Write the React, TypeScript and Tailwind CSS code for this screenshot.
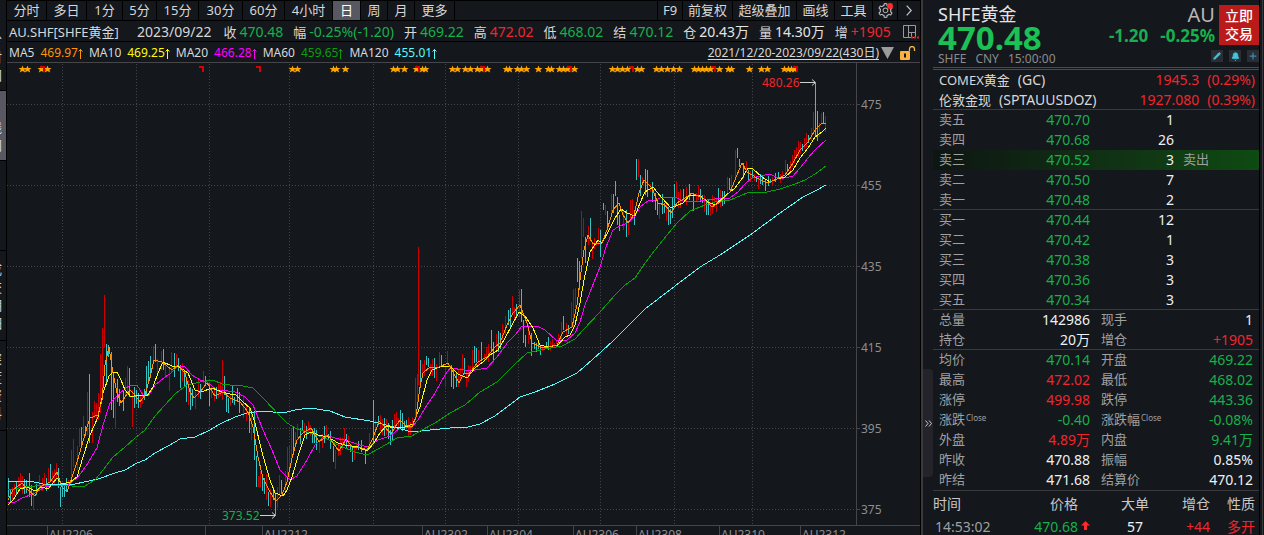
import { Bell, Pencil, Plus } from 'lucide-react';
import { AiOutlineSetting } from 'react-icons/ai';

type Bar = [number, number, number, 'r' | 'c'];

const PERIODS = [
  { label: '分时', width: 'w-10' },
  { label: '多日', width: 'w-10' },
  { label: '1分', width: 'w-9' },
  { label: '5分', width: 'w-[34px]' },
  { label: '15分', width: 'w-[42px]' },
  { label: '30分', width: 'w-11' },
  { label: '60分', width: 'w-[42px]' },
  { label: '4小时', width: 'w-12' },
  { label: '日', width: 'w-7', active: true },
  { label: '周', width: 'w-[27px]' },
  { label: '月', width: 'w-[27px]' },
  { label: '更多', width: 'w-10' },
];

const TOOLS = [
  { label: 'F9', width: 'w-[25px]' },
  { label: '前复权', width: 'w-[50px]' },
  { label: '超级叠加', width: 'w-16' },
  { label: '画线', width: 'w-[38px]' },
  { label: '工具', width: 'w-[38px]' },
];

const QUOTE = [
  { label: '收', value: '470.48', color: 'text-[#18b04c]' },
  { label: '幅', value: '-0.25%(-1.20)', color: 'text-[#18b04c]' },
  { label: '开', value: '469.22', color: 'text-[#18b04c]' },
  { label: '高', value: '472.02', color: 'text-[#f0262d]' },
  { label: '低', value: '468.02', color: 'text-[#18b04c]' },
  { label: '结', value: '470.12', color: 'text-[#18b04c]' },
  { label: '仓', value: '20.43万', color: 'text-[#e4e4e4]' },
  { label: '量', value: '14.30万', color: 'text-[#e4e4e4]' },
  { label: '增', value: '+1905', color: 'text-[#f0262d]' },
];

const AVERAGES = [
  { label: 'MA5', value: '469.97', color: 'text-[#ff9500]' },
  { label: 'MA10', value: '469.25', color: 'text-[#ffff00]' },
  { label: 'MA20', value: '466.28', color: 'text-[#ff00ff]' },
  { label: 'MA60', value: '459.65', color: 'text-[#08a008]' },
  { label: 'MA120', value: '455.01', color: 'text-[#54fcfc]' },
];

const SIDE_TABS = [
  { label: '分时图', box: 'h-[91px] items-end pb-1.5' },
  { label: 'K线图', box: 'h-[70px] items-end bg-[#585862] pb-1.5' },
  { label: '', box: 'h-[90px]' },
  { label: '成交明细', box: 'h-[90px] items-center' },
  { label: '深度资料', box: 'h-[90px] items-center' },
];

const SELLS = [
  ['卖五', '470.70', '1'],
  ['卖四', '470.68', '26'],
  ['卖三', '470.52', '3'],
  ['卖二', '470.50', '7'],
  ['卖一', '470.48', '2'],
];

const BUYS = [
  ['买一', '470.44', '12'],
  ['买二', '470.42', '1'],
  ['买三', '470.38', '3'],
  ['买四', '470.36', '3'],
  ['买五', '470.34', '3'],
];

const WHITE = 'text-[#f0f0f0]';
const RED = 'text-[#f0262d]';
const GREEN = 'text-[#18b04c]';

// label, value, colour, small mark after the label
const STATS: [string, string, string, string?][][] = [
  [['总量', '142986', WHITE], ['现手', '1', WHITE]],
  [['持仓', '20万', WHITE], ['增仓', '+1905', RED]],
  [['均价', '470.14', GREEN], ['开盘', '469.22', GREEN]],
  [['最高', '472.02', RED], ['最低', '468.02', GREEN]],
  [['涨停', '499.98', RED], ['跌停', '443.36', GREEN]],
  [['涨跌', '-0.40', GREEN, 'Close'], ['涨跌幅', '-0.08%', GREEN, 'Close']],
  [['外盘', '4.89万', RED], ['内盘', '9.41万', GREEN]],
  [['昨收', '470.88', WHITE], ['振幅', '0.85%', WHITE]],
  [['昨结', '471.68', WHITE], ['结算价', '470.12', WHITE]],
];

const MA5 =
  '8,500 13,490 22,483 28,490 35,496 40,487 50,482 57,472 62,487 67,492 72,477 77,462 82,445 87,427 90,418 98,415 102,400 105,365 109,347 113,373 117,393 121,403 125,397 130,390 135,395 140,402 145,395 150,377 154,360 162,362 172,370 178,365 185,373 190,392 194,398 200,392 207,383 215,396 223,392 230,398 240,402 248,412 253,427 258,457 263,478 270,492 276,501 282,495 287,482 292,458 297,440 303,433 311,428 319,442 328,435 333,443 339,451 346,439 353,448 360,447 367,450 373,438 379,421 385,427 391,434 395,427 400,420 405,425 412,427 416,417 420,387 423,373 430,367 437,368 448,363 453,372 459,383 464,373 469,374 478,362 487,357 495,347 500,343 507,325 513,313 520,305 527,323 532,343 543,348 557,345 563,332 572,327 577,305 580,280 584,250 588,235 593,244 602,243 608,227 613,210 619,203 623,215 628,223 634,215 639,193 644,180 652,188 658,203 665,205 671,213 677,203 685,198 692,193 703,198 712,207 720,202 730,192 737,175 742,163 747,172 757,178 767,183 777,179 785,175 793,163 800,150 808,142 815,130 822,123 826,124';
const MA10 =
  '8,505 13,500 20,489 27,487 35,491 42,487 48,489 57,478 62,484 70,482 77,477 83,457 90,435 98,417 103,393 109,376 112,373 117,372 121,380 125,390 131,397 137,395 147,396 153,387 158,373 163,362 172,366 178,366 188,373 195,390 201,392 212,388 222,392 230,394 235,394 243,402 250,408 255,423 262,452 270,480 275,493 283,496 287,490 292,477 299,453 305,435 311,432 318,435 328,437 338,443 345,445 358,447 367,451 374,443 380,433 386,426 395,428 405,427 413,424 420,407 427,380 432,370 440,367 450,366 458,374 467,378 475,368 483,362 490,355 498,350 505,338 512,325 519,312 525,316 533,328 540,345 548,347 558,345 565,337 570,335 575,325 580,303 584,280 590,252 598,240 602,243 608,232 615,218 621,209 627,213 635,216 640,203 645,192 653,187 662,198 671,208 683,203 690,195 700,196 708,202 715,205 725,196 735,188 743,177 748,168 753,169 762,177 770,182 777,179 785,177 793,170 800,158 808,148 815,137 822,132 826,128';
const MA20 =
  '8,502 15,502 22,498 33,494 45,487 57,485 67,486 78,477 88,463 97,448 103,425 110,403 120,393 130,385 137,385 143,395 149,395 155,385 165,377 170,374 178,366 185,367 192,375 200,380 207,382 217,390 228,391 235,392 245,397 253,405 263,430 272,450 280,470 290,480 297,476 307,460 315,445 325,435 335,438 348,441 360,445 368,447 378,440 390,436 400,428 412,427 418,420 425,408 435,393 445,375 450,368 465,370 475,370 487,368 497,357 508,342 515,335 522,326 537,326 545,330 557,341 567,340 575,333 580,322 585,305 592,287 600,267 606,247 613,230 618,227 627,223 635,216 640,207 648,201 655,200 663,197 675,197 685,202 700,201 715,199 730,198 738,192 745,184 752,178 760,176 770,174 780,179 793,176 800,168 808,158 815,150 826,140';
const MA60 =
  '8,490 25,487 45,485 60,485 83,487 95,480 103,470 113,457 125,447 135,438 145,430 155,416 165,405 175,394 187,385 200,382 213,380 222,384 230,385 243,386 253,388 265,400 278,414 287,423 297,429 310,433 325,438 340,446 355,452 367,455 380,448 397,438 412,436 420,431 435,423 450,413 465,405 480,392 497,382 513,366 527,353 545,349 562,346 575,339 583,330 600,312 615,295 625,285 635,278 643,266 655,250 667,235 677,223 690,211 705,205 715,202 730,200 747,193 767,192 780,189 795,184 805,180 815,174 826,166';
const MA120 =
  '8,481 30,481 43,484 60,485 75,484 98,479 115,473 125,470 137,463 145,460 155,453 170,445 180,439 195,437 210,430 220,424 235,417 247,413 262,411 283,413 295,410 310,408 330,411 345,417 370,421 390,426 412,432 430,430 450,428 468,427 480,424 495,416 520,397 535,392 555,384 577,373 592,360 613,341 635,319 645,309 675,286 700,267 720,255 750,235 780,213 803,197 815,191 826,185';

// bars that stand out: x, high, low, red or cyan
const KEY_BARS: Bar[] = [
  [8, 478, 497, 'c'], [10, 490, 503, 'c'], [29, 473, 497, 'c'], [31, 485, 506, 'c'], [33, 490, 510, 'r'], [39, 475, 490, 'r'],
  [48, 468, 486, 'r'], [50, 464, 482, 'c'], [56, 463, 480, 'r'], [58, 468, 488, 'c'], [60, 487, 507, 'c'], [62, 484, 497, 'c'],
  [71, 450, 482, 'r'], [73, 439, 467, 'r'], [77, 446, 470, 'r'], [79, 429, 447, 'r'], [81, 427, 448, 'c'], [83, 416, 436, 'r'],
  [85, 426, 436, 'c'], [87, 392, 435, 'r'], [89, 374, 443, 'c'], [92, 412, 443, 'r'], [94, 401, 418, 'r'], [96, 403, 420, 'r'],
  [98, 393, 420, 'r'], [100, 354, 413, 'r'], [102, 328, 393, 'r'], [104, 295, 348, 'r'], [106, 344, 382, 'c'], [108, 345, 357, 'c'],
  [111, 352, 410, 'c'], [113, 372, 418, 'c'], [115, 397, 428, 'r'], [117, 379, 402, 'c'], [119, 389, 406, 'c'], [123, 390, 411, 'c'],
  [125, 378, 397, 'r'], [127, 366, 393, 'r'], [129, 368, 397, 'c'], [132, 390, 427, 'r'], [134, 387, 408, 'c'], [138, 393, 408, 'c'],
  [146, 366, 395, 'c'], [148, 361, 380, 'c'], [150, 356, 378, 'c'], [153, 346, 363, 'r'], [155, 344, 362, 'c'], [157, 359, 376, 'r'],
  [161, 351, 370, 'r'], [163, 349, 370, 'c'], [165, 362, 378, 'r'], [169, 367, 391, 'r'], [171, 352, 372, 'r'], [174, 353, 377, 'c'],
  [176, 354, 367, 'r'], [178, 358, 371, 'c'], [180, 365, 388, 'c'], [182, 363, 382, 'r'], [186, 377, 402, 'c'], [188, 380, 405, 'r'],
  [190, 387, 410, 'c'], [195, 392, 409, 'r'], [203, 371, 383, 'r'], [205, 376, 386, 'c'], [209, 383, 406, 'c'], [211, 387, 398, 'r'],
  [218, 384, 398, 'r'], [222, 360, 400, 'r'], [224, 376, 395, 'c'], [226, 396, 412, 'c'], [228, 398, 413, 'c'], [232, 385, 403, 'c'],
  [237, 388, 400, 'c'], [239, 392, 413, 'c'], [243, 395, 418, 'r'], [249, 407, 433, 'c'], [251, 410, 440, 'r'], [254, 412, 460, 'c'],
  [256, 456, 487, 'c'], [258, 476, 487, 'r'], [260, 471, 487, 'r'], [262, 474, 491, 'c'], [264, 478, 494, 'c'], [266, 474, 500, 'r'],
  [268, 492, 506, 'c'], [270, 489, 507, 'r'], [273, 487, 500, 'c'], [275, 493, 515, 'c'], [277, 487, 508, 'r'], [279, 475, 495, 'r'],
  [281, 480, 494, 'c'], [285, 471, 493, 'r'], [287, 447, 480, 'r'], [289, 445, 478, 'r'], [291, 428, 465, 'r'], [293, 427, 455, 'c'],
  [295, 432, 446, 'r'], [297, 424, 438, 'r'], [302, 420, 430, 'c'], [308, 421, 434, 'r'], [319, 440, 453, 'r'], [333, 446, 462, 'c'],
  [335, 450, 469, 'r'], [352, 448, 462, 'c'], [354, 446, 460, 'r'], [361, 440, 452, 'c'], [365, 450, 464, 'c'], [369, 433, 447, 'r'],
  [373, 400, 443, 'c'], [375, 420, 441, 'r'], [378, 416, 425, 'c'], [390, 430, 445, 'c'], [394, 414, 430, 'r'], [396, 412, 425, 'r'],
  [415, 378, 420, 'r'], [417, 374, 410, 'r'], [418, 247, 385, 'r'], [420, 360, 388, 'c'], [424, 360, 376, 'r'], [426, 356, 365, 'c'],
  [428, 358, 367, 'c'], [436, 364, 381, 'r'], [439, 352, 367, 'r'], [441, 355, 366, 'c'], [445, 367, 387, 'r'], [447, 351, 365, 'r'],
  [451, 365, 387, 'c'], [453, 370, 389, 'c'], [462, 354, 373, 'r'], [464, 358, 374, 'c'], [466, 370, 387, 'r'], [472, 350, 370, 'r'],
  [474, 346, 363, 'c'], [476, 348, 362, 'c'], [481, 342, 360, 'c'], [491, 330, 352, 'c'], [493, 342, 360, 'c'], [505, 316, 335, 'r'],
  [508, 310, 325, 'c'], [510, 308, 327, 'c'], [512, 296, 313, 'r'], [516, 304, 318, 'c'], [519, 290, 317, 'r'], [521, 289, 322, 'c'],
  [523, 320, 343, 'c'], [525, 335, 347, 'c'], [531, 333, 356, 'c'], [540, 345, 355, 'c'], [548, 337, 350, 'c'], [561, 322, 340, 'r'],
  [563, 316, 330, 'c'], [571, 302, 327, 'r'], [573, 289, 330, 'r'], [575, 288, 308, 'r'], [577, 258, 282, 'c'], [579, 261, 290, 'c'],
  [581, 211, 258, 'r'], [583, 218, 237, 'r'], [585, 237, 263, 'c'], [588, 226, 245, 'r'], [590, 218, 240, 'c'], [592, 243, 259, 'r'],
  [598, 228, 245, 'r'], [600, 230, 257, 'c'], [603, 203, 210, 'c'], [605, 205, 215, 'r'], [607, 211, 228, 'c'], [611, 194, 215, 'r'],
  [613, 194, 213, 'c'], [615, 181, 196, 'c'], [617, 197, 225, 'c'], [619, 215, 231, 'c'], [623, 210, 230, 'r'], [626, 210, 237, 'c'],
  [628, 222, 235, 'r'], [630, 200, 222, 'r'], [632, 199, 215, 'r'], [634, 213, 225, 'c'], [636, 159, 180, 'c'], [638, 159, 177, 'r'],
  [645, 169, 195, 'c'], [647, 170, 197, 'c'], [655, 193, 210, 'c'], [657, 200, 215, 'c'], [659, 203, 219, 'r'], [666, 202, 221, 'r'],
  [668, 207, 225, 'c'], [670, 209, 224, 'c'], [674, 184, 207, 'c'], [676, 181, 197, 'r'], [683, 189, 200, 'c'], [689, 184, 200, 'c'],
  [693, 193, 211, 'c'], [706, 202, 215, 'c'], [710, 202, 216, 'r'], [718, 188, 203, 'c'], [727, 177, 193, 'r'], [729, 178, 190, 'c'],
  [731, 175, 188, 'r'], [735, 150, 177, 'r'], [737, 148, 158, 'c'], [739, 159, 167, 'c'], [743, 163, 178, 'c'], [746, 161, 170, 'r'],
  [748, 170, 181, 'c'], [758, 177, 189, 'r'], [765, 180, 191, 'c'], [775, 173, 182, 'c'], [785, 160, 175, 'r'], [787, 164, 172, 'c'],
  [792, 155, 167, 'r'], [794, 150, 163, 'r'], [798, 141, 157, 'r'], [802, 144, 151, 'c'], [806, 133, 147, 'r'], [808, 135, 143, 'c'],
  [811, 128, 141, 'r'], [813, 112, 132, 'r'], [815, 83, 136, 'c'], [817, 111, 141, 'c'], [819, 123, 137, 'r'], [821, 113, 123, 'r'],
  [823, 112, 123, 'c'], [825, 116, 132, 'r'],
];

const points = MA5.split(' ').map((p) => p.split(',').map(Number));

function priceAt(x: number) {
  const i = points.findIndex((p) => p[0] >= x);
  if (i <= 0) return points[i < 0 ? points.length - 1 : 0][1];
  const [x0, y0] = points[i - 1];
  const [x1, y1] = points[i];
  return y0 + ((y1 - y0) * (x - x0)) / (x1 - x0);
}

// quiet days between the key bars follow the 5 day line
function fillBars() {
  const out: Bar[] = [];
  let seed = 7;
  const rand = () => {
    seed = (seed * 16807) % 2147483647;
    return seed / 2147483647;
  };
  for (let x = 12; x < 825; x += 2) {
    const a = rand();
    const b = rand();
    const c = rand();
    if (KEY_BARS.some((k) => Math.abs(k[0] - x) < 2)) continue;
    const mid = priceAt(Math.min(x + 2, 826));
    const calm = x > 740 || (x > 535 && x < 560) ? 0.6 : 1;
    const rising = priceAt(x + 3) < priceAt(x);
    out.push([x, Math.round(mid - (2 + a * 10) * calm), Math.round(mid + (2 + b * 9) * calm), c < (rising ? 0.7 : 0.4) ? 'r' : 'c']);
  }
  return out;
}

const BARS = [...fillBars(), ...KEY_BARS];

const LINES = [
  { points: MA120, color: '#54fcfc' },
  { points: MA60, color: '#08a008' },
  { points: MA20, color: '#ff00ff' },
  { points: MA10, color: '#ffff00' },
  { points: MA5, color: '#ff9500' },
];

const GRID_X = [62, 136, 209, 289, 373, 445, 518, 600, 674, 752];
const GRID_Y = [
  { y: 104, label: '475' },
  { y: 185, label: '455' },
  { y: 266, label: '435' },
  { y: 347, label: '415' },
  { y: 428, label: '395' },
  { y: 509, label: '375' },
];
const CONTRACTS = [
  { x: 47, label: 'AU2206' },
  { x: 205, label: '' },
  { x: 262, label: 'AU2212' },
  { x: 422, label: 'AU2302' },
  { x: 487, label: 'AU2304' },
  { x: 573, label: 'AU2306' },
  { x: 636, label: 'AU2308' },
  { x: 719, label: 'AU2310' },
  { x: 800, label: 'AU2312' },
];
const STARS = [
  22, 27, 41, 47, 292, 297, 333, 336, 345, 393, 397, 404, 416, 422, 425, 452, 457, 465, 470, 477, 481, 487, 506, 509, 517, 521, 526, 538,
  548, 551, 559, 563, 567, 574, 612, 617, 622, 627, 637, 641, 656, 661, 667, 673, 679, 694, 698, 702, 706, 710, 719, 728, 731, 749, 761,
  767, 784, 788, 791, 794,
];
const FLAGS = [44, 203, 260, 419, 484, 571, 633, 715, 797];

function Chart() {
  return (
    <svg viewBox="7 63 913 472" className="block h-[472px] w-full" preserveAspectRatio="xMinYMin meet" role="img" aria-label="AU.SHF">
      <g stroke="#45454a" strokeDasharray="1 2" shapeRendering="crispEdges">
        {GRID_X.map((x) => (
          <line key={x} x1={x + 0.5} x2={x + 0.5} y1={64} y2={525} />
        ))}
        {GRID_Y.map((g) => (
          <line key={g.y} x1={7} x2={856} y1={g.y + 0.5} y2={g.y + 0.5} />
        ))}
      </g>
      <g stroke="#45454a" shapeRendering="crispEdges">
        <line x1={856.5} x2={856.5} y1={63} y2={525} />
        <line x1={7} x2={920} y1={525.5} y2={525.5} />
        {GRID_Y.map((g) => (
          <line key={g.y} x1={856} x2={860} y1={g.y + 0.5} y2={g.y + 0.5} />
        ))}
        {CONTRACTS.map((c) => (
          <line key={c.x} x1={c.x + 0.5} x2={c.x + 0.5} y1={525} y2={535} />
        ))}
      </g>

      <g shapeRendering="crispEdges">
        {BARS.map(([x, top, bottom, tone], i) => (
          <rect key={i} x={x} y={top} width={1} height={bottom - top} fill={tone === 'r' ? '#cc0000' : '#35c4c4'} />
        ))}
      </g>
      <g fill="none" shapeRendering="crispEdges">
        {LINES.map((l) => (
          <polyline key={l.color} points={l.points} stroke={l.color} />
        ))}
      </g>

      {STARS.map((x) => (
        <path
          key={x}
          d={`M${x + 0.5} 65.5l1 2.5h3l-2.2 1.8.9 2.7-2.7-1.6-2.7 1.6.9-2.7-2.2-1.8h3z`}
          fill="#ffa500"
        />
      ))}
      {FLAGS.map((x) => (
        <path key={x} d={`M${x - 4} 66h5v6h-2v-4h-3z`} fill="#d80000" />
      ))}

      <g fontSize={12} className="font-['Noto_Sans']" fill="#8e8e90">
        {GRID_Y.map((g) => (
          <text key={g.y} x={861} y={g.y + 5}>{g.label}</text>
        ))}
        {CONTRACTS.map((c) => (
          <text key={c.x} x={c.x + 2} y={539}>{c.label}</text>
        ))}
        <text x={762} y={87} fill="#f0262d">480.26</text>
        <text x={222} y={520} fill="#18b04c">373.52</text>
      </g>
      <g fill="none" stroke="#d0d0d0">
        <path d="M800 82.5h15M812 79.5l3.5 3-3.5 3" />
        <path d="M260 515.5h15M272 512.5l3.5 3-3.5 3" />
      </g>
    </svg>
  );
}

function OrderTable({ rows }: { rows: string[][] }) {
  return (
    <table className="w-full table-fixed border-b border-[#3a3a3e]">
      <colgroup>
        <col className="w-[50px]" />
        <col className="w-[107px]" />
        <col className="w-[84px]" />
        <col />
      </colgroup>
      <tbody>
        {rows.map(([label, price, count], i) => {
          const hit = label === '卖三';
          const height = i === rows.length - 1 ? 'h-[19px]' : 'h-5';
          return (
            <tr key={label} className={`${height} leading-[19px] ${hit ? 'bg-linear-to-r from-[#0d1611] to-[#0e4a12]' : ''}`}>
              <th className="p-0 pl-1.5 text-left align-top text-[13px] font-normal text-[#a0a0a0]">{label}</th>
              <td className="p-0 text-right align-top text-[#18b04c]">{price}</td>
              <td className="p-0 text-right align-top text-[#f0f0f0]">{count}</td>
              <td className="p-0 pl-[9px] align-top text-[13px] text-[#a0a0a0]">{hit ? '卖出' : ''}</td>
            </tr>
          );
        })}
      </tbody>
    </table>
  );
}

export default function App() {
  return (
    <div className="flex h-screen min-h-[535px] overflow-hidden bg-[#14171c] font-['Noto_Sans','Noto_Sans_CJK_SC',sans-serif] text-sm text-[#d8d8d8]">
      {/* left edge tabs */}
      <nav className="w-[7px] shrink-0 overflow-hidden border-r border-black text-[13px] leading-[18px]">
        {SIDE_TABS.map((t) => (
          <button key={t.box + t.label} type="button" className={`flex w-full justify-end border-b border-black pr-1 ${t.box}`}>
            <span className="w-[13px] shrink-0 break-all">{t.label}</span>
          </button>
        ))}
      </nav>

      <main className="min-w-0 flex-1">
        <div className="flex h-[21px] border-y border-black text-[13px] leading-[19px]">
          {PERIODS.map((p) => (
            <button
              key={p.label}
              type="button"
              className={`shrink-0 border-r border-black whitespace-nowrap ${p.width} ${p.active ? 'bg-[#585862] text-white' : ''}`}
            >
              {p.label}
            </button>
          ))}
          <div className="ml-auto flex">
            {TOOLS.map((t) => (
              <button key={t.label} type="button" className={`shrink-0 border-l border-black whitespace-nowrap ${t.width}`}>
                {t.label}
              </button>
            ))}
            <button type="button" aria-label="设置" className="relative flex w-[25px] items-center justify-center border-l border-black">
              <AiOutlineSetting size={17} className="text-[#b4b4b4]" />
              <span className="absolute top-0.5 right-1 size-1.5 rounded-full bg-[#ff2a2a]" />
            </button>
            <button type="button" aria-label="更多工具" className="flex w-[23px] items-center justify-center border-l border-black">
              <svg width="6" height="11" viewBox="0 0 6 11" fill="none" stroke="#c8c8c8" strokeWidth="1.2">
                <path d="M.7.7l4.5 4.8-4.5 4.8" />
              </svg>
            </button>
          </div>
        </div>

        <div className="flex h-[21px] items-center gap-2.5 border-b border-black pt-0.5 pl-0.5 leading-5 whitespace-nowrap">
          <h1 className="w-[118px] shrink-0 text-[13px]">AU.SHF[SHFE黄金]</h1>
          <time className="pr-0.5">2023/09/22</time>
          {QUOTE.map((q) => (
            <div key={q.label} className="flex gap-[3px]">
              <span className="text-[13px]">{q.label}</span>
              <span className={q.color}>{q.value}</span>
            </div>
          ))}
          <button type="button" aria-label="布局" className="mr-px ml-auto">
            <svg width="17" height="14" viewBox="0 0 17 14" fill="none" stroke="#9a9a9a">
              <path d="M1.5.5h12v12h-12zM6.5.5v12M6.5 7.5h7M9.5 7.5v5" />
              <path d="M9 12.5h8" stroke="#e02020" strokeWidth="2" strokeDasharray="2 1" />
            </svg>
          </button>
        </div>

        <div className="flex h-[21px] items-center gap-1.5 border-b border-[#45454a] pt-0.5 pl-0.5 text-xs leading-5 whitespace-nowrap">
          {AVERAGES.map((m) => (
            <div key={m.label} className="flex items-center">
              <span>{m.label}</span>
              <span className={`ml-1.5 ${m.color}`}>{m.value}</span>
              <svg width="5" height="11" viewBox="0 0 5 11" fill="none" stroke="currentColor" className={m.color}>
                <path d="M2.5 11V1M.5 3.5l2-2 2 2" />
              </svg>
            </div>
          ))}
          <a href="#range" className="ml-auto underline underline-offset-2">2021/12/20-2023/09/22(430日)</a>
          <button type="button" aria-label="选择区间" className="-ml-1">
            <svg width="13" height="12" viewBox="0 0 13 12" fill="#9c9c9c">
              <path d="M0 0h13L6.5 12z" />
            </svg>
          </button>
          <button type="button" aria-label="解锁" className="mr-1">
            <svg width="16" height="14" viewBox="0 0 16 14">
              <rect x="0" y="5" width="10" height="9" rx="1" fill="#fcb040" />
              <path d="M9.5 5V3a2.5 2.5 0 0 1 5 0v2" fill="none" stroke="#fcb040" strokeWidth="1.3" />
              <rect x="4" y="7.5" width="2" height="4" fill="#14171c" />
            </svg>
          </button>
        </div>

        <Chart />
      </main>

      <aside className="flex w-[344px] shrink-0 border-l border-black">
        <div className="w-3 shrink-0 border-l-2 border-[#3a3a3e] pt-[369px]">
          <button type="button" aria-label="收起" className="flex h-[108px] w-full items-center justify-center rounded-r-sm bg-[#232329]">
            <svg width="7" height="7" viewBox="0 0 7 7" fill="none" stroke="#c8c8c8">
              <path d="M.5.5l2.5 3-2.5 3M4 .5l2.5 3-2.5 3" />
            </svg>
          </button>
        </div>

        <div className="min-w-0 flex-1">
          <header className="flex h-[67px] justify-between pl-[5px]">
            <div>
              <h2 className="h-[26px] text-lg leading-7 text-[#e4e4e4]">SHFE黄金</h2>
              <p className="h-[25px] text-[33px] leading-6 font-bold text-[#1cc054]">470.48</p>
              <p className="flex gap-[9px] text-xs leading-4 text-[#8c8c8c]">
                <span>SHFE</span>
                <span>CNY</span>
                <span>15:00:00</span>
              </p>
            </div>
            <div className="flex">
              <div className="text-right">
                <p className="h-[26px] text-xl leading-[30px] text-[#b8b8b8]">AU</p>
                <p className="flex gap-3 text-[17px] leading-5 font-bold text-[#18b04c]">
                  <span>-1.20</span>
                  <span>-0.25%</span>
                </p>
              </div>
              <div className="-ml-1 flex flex-col items-end gap-[5px] pt-[5px]">
                <button type="button" className="size-10 bg-[#bb1a1a] px-1.5 text-sm leading-[18px] font-medium text-white">立即交易</button>
                <div className="flex gap-1.5 text-[#3cc8dc]">
                  <button type="button" aria-label="编辑" className="flex size-3 items-center justify-center bg-[#2a2d34]">
                    <Pencil size={8} fill="currentColor" />
                  </button>
                  <button type="button" aria-label="提醒" className="flex size-3 items-center justify-center bg-[#2a2d34]">
                    <Bell size={9} fill="currentColor" />
                  </button>
                  <button type="button" aria-label="添加" className="flex size-3 items-center justify-center bg-[#2a2d34]">
                    <Plus size={10} strokeWidth={3} className="text-[#3a8cb4]" />
                  </button>
                </div>
              </div>
            </div>
          </header>

          <div className="border-t-[3px] border-double border-[#4a4a4e]">
            <a href="#gc" className="flex h-5 justify-between pr-1 pl-1.5 leading-5">
              <span className="flex gap-2"><span className="text-[13px]">COMEX黄金</span><span>(GC)</span></span>
              <span className="flex gap-2 text-[#f0262d]"><span>1945.3</span><span>(0.29%)</span></span>
            </a>
            <a href="#spt" className="flex h-5 justify-between border-b border-[#3a3a3e] pr-1 pl-1.5 leading-5">
              <span className="flex gap-2"><span className="text-[13px]">伦敦金现</span><span>(SPTAUUSDOZ)</span></span>
              <span className="flex gap-2 text-[#f0262d]"><span>1927.080</span><span>(0.39%)</span></span>
            </a>
          </div>

          <OrderTable rows={SELLS} />
          <OrderTable rows={BUYS} />

          <dl>
            {STATS.map((row, i) => (
              <div
                key={row[0][0]}
                className={`grid h-5 grid-cols-[157px_1fr] leading-5 ${i === 1 ? 'border-b border-[#3a3a3e]' : ''}`}
              >
                {row.map(([label, value, color, mark], j) => (
                  <div key={label} className={`flex justify-between ${j === 0 ? 'pl-1.5' : 'pr-1.5 pl-[11px]'}`}>
                    <dt className="flex text-[13px] leading-[19px] text-[#a0a0a0]">
                      {label}
                      {mark && <small className="pl-px text-[8px] leading-4">{mark}</small>}
                    </dt>
                    <dd className={color}>{value}</dd>
                  </div>
                ))}
              </div>
            ))}
          </dl>

          <table className="w-full table-fixed border-t border-[#3a3a3e] text-right">
            <colgroup>
              <col className="w-[76px]" />
              <col className="w-[69px]" />
              <col className="w-[71px]" />
              <col className="w-[61px]" />
              <col />
            </colgroup>
            <thead>
              <tr className="h-[26px] leading-[26px] text-[#c8c8c8]">
                <th className="p-0 text-left font-normal">时间</th>
                <th className="p-0 font-normal">价格</th>
                <th className="p-0 font-normal">大单</th>
                <th className="p-0 font-normal">增仓</th>
                <th className="p-0 pr-1 font-normal">性质</th>
              </tr>
            </thead>
            <tbody>
              <tr className="h-5 leading-5">
                <td className="p-0 pl-0.5 text-left text-[#a0a0a0]">14:53:02</td>
                <td className="relative p-0 text-[#18b04c]">
                  470.68
                  <svg width="9" height="9" viewBox="0 0 9 9" fill="#ff2a2a" className="absolute top-1 left-full ml-[3px]">
                    <path d="M4.5 0L9 4.5H6V9H3V4.5H0z" />
                  </svg>
                </td>
                <td className="p-0 pr-1.5 text-[#f0f0f0]">57</td>
                <td className="p-0 text-[#f0262d]">+44</td>
                <td className="p-0 pr-1 text-[#f0262d]">多开</td>
              </tr>
            </tbody>
          </table>
        </div>

        <div className="w-[5px] shrink-0 border-l border-black pl-0.5">
          <div className="h-full w-px bg-[#3a3a3e]" />
        </div>
      </aside>
    </div>
  );
}
